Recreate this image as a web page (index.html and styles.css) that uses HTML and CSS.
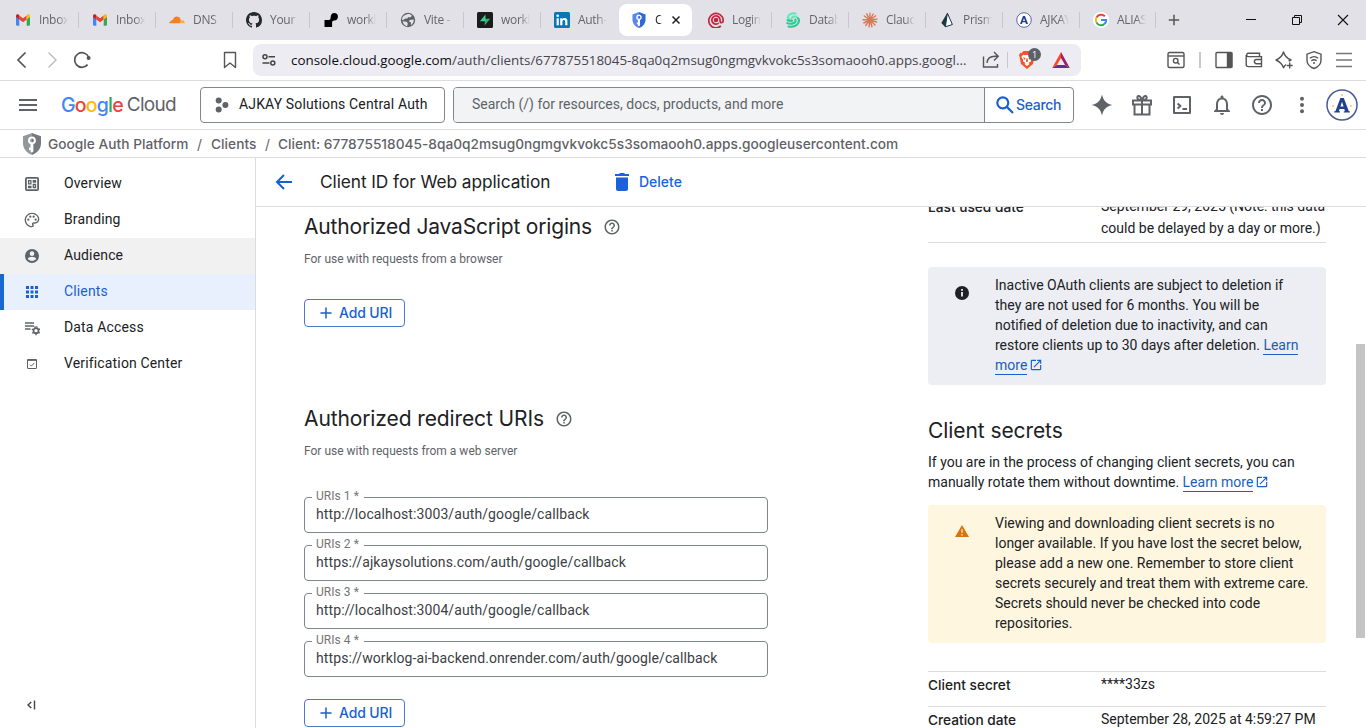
FILE: index.html
```html
<!DOCTYPE html>
<html lang="en">
<head>
<meta charset="utf-8">
<title>Google Auth Platform</title>
<link rel="stylesheet" href="styles.css">
</head>
<body>
<svg class="defs" width="0" height="0">
  <defs>
    <symbol id="gmail" viewBox="0 0 16 16">
      <path fill="#4285f4" d="M1 4.6v8c0 .6.5 1.100 1.100 1.100H4.300V7.300L1 4.600z"/>
      <path fill="#34a853" d="M11.700 13.700h2.200c.6 0 1.100-.5 1.100-1.100v-8l-3.300 2.700z"/>
      <path fill="#ea4335" d="M4.300 7.500V3.500L8 6.300l3.700-2.800v4L8 10.300z"/>
      <path fill="#fbbc04" d="M11.700 3.500v4L15 5V3.900c0-1.400-1.500-2.100-2.600-1.300z"/>
      <path fill="#c5221f" d="M1 5l3.300 2.500v-4l-.7-.9C2.500 1.800 1 2.500 1 3.900z"/>
    </symbol>
    <symbol id="help" viewBox="0 0 24 24">
      <path d="M11 18h2v-2h-2v2zm1-16C6.480 2 2 6.480 2 12s4.480 10 10 10 10-4.480 10-10S17.520 2 12 2zm0 18c-4.410 0-8-3.590-8-8s3.590-8 8-8 8 3.590 8 8-3.590 8-8 8zm0-14c-2.210 0-4 1.790-4 4h2c0-1.100.9-2 2-2s2 .9 2 2c0 2-3 1.750-3 5h2c0-2.250 3-2.500 3-5 0-2.210-1.790-4-4-4z"/>
    </symbol>
    <symbol id="plus" viewBox="0 0 24 24"><path d="M21.500 13.300h-8.200v8.200h-2.600v-8.200H2.500v-2.600h8.200V2.500h2.600v8.200h8.200z"/></symbol>
    <symbol id="ext" viewBox="0 0 24 24">
      <path d="M19 19H5V5h7V3H5c-1.110 0-2 .9-2 2v14c0 1.100.89 2 2 2h14c1.100 0 2-.9 2-2v-7h-2v7zM14 3v2h3.590l-9.830 9.830 1.410 1.410L19 6.410V10h2V3h-7z"/>
    </symbol>
    <symbol id="ajk" viewBox="0 0 32 32">
      <circle cx="16" cy="16" r="15" fill="#fff" stroke="#4a5a94" stroke-width="1.500"/>
      <path fill="#21418f" fill-rule="evenodd" d="M14.400 9h3.400l5 13.200h1v1.300h-6v-1.300h1.200l-.8-2.200h-4.600l-.8 2.200H14v1.300H8.200v-1.300h1.200zM16 12.700l-1.600 4.700h3.200z"/>
    </symbol>
    <symbol id="shieldkey" viewBox="0 0 20 22">
      <path class="sh-a" d="M10 0l9 3.300v7.200c0 5-3.500 9.300-9 11.500z"/>
      <path class="sh-b" d="M10 0L1 3.300v7.200c0 5 3.500 9.300 9 11.500z"/>
      <path fill="#fff" fill-rule="evenodd" d="M10 3.400a4 4 0 0 1 1.400 7.700v7.200l-1.400 1.500-1.500-1.500V17H7v-2.500h1.500v-3.400A4 4 0 0 1 10 3.400zm0 2.100a1.900 1.900 0 1 0 0 3.800 1.900 1.900 0 0 0 0-3.800z"/>
    </symbol>
  </defs>
</svg>

<div class="window">
  <div class="tabs">
    <div class="tab"><svg class="fav"><use href="#gmail"/></svg><span class="tl">Inbox</span></div>
    <div class="tab sep"><svg class="fav"><use href="#gmail"/></svg><span class="tl">Inbox</span></div>
    <div class="tab sep"><svg class="fav" viewBox="0 0 16 16"><path fill="#f48120" d="M.3 11.300c0-1.200.9-2.100 2-2.200-.1-1 .8-1.700 1.700-1.300C4.500 5.700 6 4.600 7.800 4.600c2 0 3.300 1.200 3.800 3l.3 1.500-.6 2.200z"/><path fill="#faad3f" d="M11.700 11.300l.9-3.200c1.900-.1 3.200 1.300 3.200 3.200z"/></svg><span class="tl">DNS</span></div>
    <div class="tab sep"><svg class="fav" viewBox="0 0 16 16"><path fill="#24292f" d="M8 0C3.580 0 0 3.580 0 8c0 3.540 2.290 6.530 5.470 7.590.4.070.55-.17.55-.38 0-.19-.01-.82-.01-1.490-2.010.37-2.530-.49-2.690-.94-.09-.23-.48-.94-.82-1.130-.28-.15-.68-.52-.01-.53.630-.010 1.080.580 1.230.820.720 1.210 1.870.870 2.330.660.070-.52.280-.870.510-1.070-1.780-.2-3.640-.89-3.640-3.950 0-.87.310-1.590.820-2.150-.08-.2-.36-1.020.080-2.120 0 0 .67-.21 2.200.82.640-.18 1.320-.27 2-.27s1.360.09 2 .27c1.530-1.040 2.200-.82 2.200-.82.440 1.100.160 1.920.080 2.120.510.560.820 1.270.820 2.150 0 3.070-1.870 3.750-3.650 3.950.290.250.540.730.540 1.480 0 1.070-.01 1.930-.01 2.200 0 .210.150.460.550.380A8.010 8.010 0 0 0 16 8c0-4.420-3.580-8-8-8z"/></svg><span class="tl">Your</span></div>
    <div class="tab sep"><svg class="fav" viewBox="0 0 16 16"><path d="M11.200 1a3.700 3.700 0 1 1 0 7.400c-1.200 0-2.100.8-2.100 2.100V15H1.500V8h4.200c1.200 0 1.900-.8 1.900-2.200C7.600 3 9 1 11.200 1z"/></svg><span class="tl">workl</span></div>
    <div class="tab sep"><svg class="fav" viewBox="0 0 16 16"><circle cx="8" cy="8" r="7.200" fill="#5f6368"/><path fill="#e3e2e8" d="M7 2.300c2-.6 3.900.1 4.900 1.600L10 5.500 8.200 5l-.9 1.500H5.200L3 8.200 1.900 7.500C2.100 4.800 4.500 2.800 7 2.300zM2.600 9.200l3.900.5 1.300 1.600-.6 2.900C4.700 13.700 3 11.700 2.600 9.200zM9.500 8l4.300-.6c.2 2.400-1.100 4.500-3 5.700l.2-2.500-1.800-.9z"/></svg><span class="tl">Vite -</span></div>
    <div class="tab sep"><svg class="fav" viewBox="0 0 16 16"><rect width="16" height="16" rx="1.500" fill="#1c1c1c"/><path fill="#2fae78" d="M8 6.800h5.200L7.600 13.400z"/><path fill="#3ecf8e" d="M8.500 2.500v6.700H2.900z"/></svg><span class="tl">workl</span></div>
    <div class="tab sep"><svg class="fav" viewBox="0 0 16 16"><rect width="16" height="16" rx="1.500" fill="#0a77b5"/><g fill="#fff"><circle cx="3.700" cy="3.800" r="1.300"/><path d="M2.600 6.200h2.200v7H2.600zM6.200 6.200h2.100v1c.5-.8 1.200-1.200 2.300-1.200 2.200 0 2.800 1.400 2.800 3.500v3.700h-2.200V9.900c0-1.100-.2-1.900-1.300-1.900s-1.500.8-1.500 1.900v3.300H6.200z"/></g></svg><span class="tl">Auth-</span></div>
    <div class="tab active"><svg class="fav blue"><use href="#shieldkey"/></svg><span class="tl short">Cl</span><svg class="close" viewBox="0 0 10 10"><path d="M1.500 1.500l7 7m0-7l-7 7" stroke="#222" stroke-width="1.500"/></svg></div>
    <div class="tab"><svg class="fav" viewBox="0 0 16 16" fill="none" stroke="#c2263f" stroke-width="1.700"><path d="M12.800 14A7.200 7.200 0 1 1 15.200 8.500c0 1.300-.6 2.200-1.600 2.200s-1.500-.8-1.500-1.800V8A4.100 4.100 0 1 0 10.800 11"/><circle cx="8" cy="8" r="1.400" fill="#c2263f"/></svg><span class="tl">Login</span></div>
    <div class="tab sep"><svg class="fav" viewBox="0 0 16 16" fill="none" stroke-linecap="round" stroke-width="2.100"><path stroke="#63e8b5" d="M10.500 1.500C5.500 1 3 3 3 5.200c0 1.600 1.200 2.500 3 2.600M11.500 4.600C8.200 4.100 6.800 5 7 6.300"/><path stroke="#2ec990" d="M12.800 6.200c1.300 1 1.600 3 .3 5-1.700 2.700-5.600 3.900-9.600 3.300M10.300 7.500c.9 1.400 0 3.600-3.200 4.100-1.500.3-3.300.2-4.800-.5M2.600 8.300c1.300.6 2.800.8 4.500.5"/></svg><span class="tl">Datab</span></div>
    <div class="tab sep"><svg class="fav" viewBox="0 0 16 16" stroke="#d97757" stroke-width="1.400" stroke-linecap="round"><path d="M8 8V1.200M8 8l3.200-6M8 8l5.700-4.200M8 8l7-.9M8 8l6.500 2M8 8l5 5M8 8l2 6.700M8 8l-1 6.900M8 8l-4.300 5.500M8 8l-6.200 3M8 8l-7-.3M8 8L2.300 4M8 8L4.700 1.900"/></svg><span class="tl">Claud</span></div>
    <div class="tab sep"><svg class="fav" viewBox="0 0 16 16"><path fill="#fff" stroke="#173647" stroke-width="1" d="M8.400 1.200l5 11.300-7 2.300z"/><path fill="#173647" d="M8.400.7L2.300 11l3.900 4z"/></svg><span class="tl">Prisma</span></div>
    <div class="tab sep"><svg class="fav" viewBox="0 0 16 16"><circle cx="8" cy="8" r="7.300" fill="#fff" stroke="#4a5a94" stroke-width=".9"/><path fill="#21418f" fill-rule="evenodd" d="M7 4h2l3 8h-2l-.6-1.700H6.500L5.900 12H4zM8 6.300L7 9h2z"/></svg><span class="tl">AJKAY</span></div>
    <div class="tab sep"><svg class="fav" viewBox="0 0 16 16"><circle cx="8" cy="8" r="8" fill="#fff"/><g fill="none" stroke-width="2"><path stroke="#ea4335" d="M11.900 4.300A5.200 5.200 0 0 0 3.400 5.600"/><path stroke="#fbbc04" d="M3.400 5.600a5.200 5.200 0 0 0 0 4.800"/><path stroke="#34a853" d="M3.400 10.400a5.200 5.200 0 0 0 7.900 1.700"/><path stroke="#4285f4" d="M11.300 12.100A5 5 0 0 0 13.200 8H8"/></g></svg><span class="tl">ALIAS</span></div>
    <div class="newtab"><svg width="12" height="12" viewBox="0 0 12 12"><path d="M6 .8v10.400M.8 6h10.400" stroke="#555" stroke-width="1.500"/></svg></div>
    <div class="winbtns">
      <svg width="12" height="12" viewBox="0 0 12 12"><path d="M1 5.500h10" stroke="#111"/></svg>
      <svg width="12" height="12" viewBox="0 0 12 12" fill="none" stroke="#111"><path d="M1.500 3.500h7v7h-7zM3.500 3.500v-2h7v7h-2"/></svg>
      <svg width="12" height="12" viewBox="0 0 12 12"><path d="M1 1l10 10M11 1L1 11" stroke="#111" stroke-width="1.100"/></svg>
    </div>
  </div>

  <div class="toolbar">
    <svg class="ti back" viewBox="0 0 20 20"><path d="M13.500 2.500L6 10l7.500 7.500"/></svg>
    <svg class="ti fwd" viewBox="0 0 20 20"><path d="M6.500 2.500L14 10l-7.500 7.500"/></svg>
    <svg class="ti reload" viewBox="0 0 20 20"><path d="M15.600 14.600A7.300 7.300 0 1 1 16.600 7"/><circle cx="16.600" cy="7.900" r="2" fill="#555" stroke="none"/></svg>
    <svg class="ti bookmark" viewBox="0 0 20 20"><path d="M4.500 2.500h11v15L10 13l-5.500 4.500z" stroke-linejoin="round"/></svg>
    <div class="urlbar">
      <svg class="tune" viewBox="0 0 16 16" fill="none" stroke="#444" stroke-width="1.500"><circle cx="4" cy="4.700" r="2"/><path d="M7.500 4.700H14M1.500 11h7"/><circle cx="11.800" cy="11" r="2"/></svg>
      <div class="url"><b>console.cloud.google.com</b>/auth/clients/677875518045-8qa0q2msug0ngmgvkvokc5s3somaooh0.apps.googl...</div>
      <svg class="ti share" viewBox="0 0 20 20"><path d="M2.500 6.500v10.500h14v-3M6 13c.3-4.500 3-6.800 8-6.800h3M13 2l4.200 4.200L13 10.400"/></svg>
      <i class="vsep"></i>
      <span class="brave"><svg width="18" height="20" viewBox="0 0 18 20"><path fill="#f1562b" d="M5.500 1h7L14.300 3l1.400-.2 1.300 2.400-.5 1.600-1.500 7.200L9 19l-6-5L1.500 6.800 1 5.200l1.300-2.400L3.700 3z"/><path fill="#fff" d="M5 4.700l2.300.5L9 4.700l1.700.5 2.300-.5 1.700 2.300-2 2.800.4 1.400L10.500 13l1 1L9 16l-2.500-2 1-1-2.600-1.800.4-1.400-2-2.800z"/><path fill="#f1562b" d="M5 7.300l2.600.6-1 2zM13 7.300l-2.600.6 1 2zM8.300 8.500h1.400l.3 3-1 .7-1-.7z"/></svg><span class="badge">1</span></span>
      <svg class="bat" width="20" height="20" viewBox="0 0 20 20"><path fill="#ff4724" d="M10 2L1.200 18l4.700-2.900L10 8z"/><path fill="#9e1f63" d="M10 2l8.800 16-4.700-2.900L10 8z"/><path fill="#662d91" d="M1.200 18h17.600l-4.700-2.900H5.900z"/></svg>
    </div>
    <div class="tright">
      <svg class="ti" viewBox="0 0 20 20"><rect x="2" y="2.500" width="16" height="15" rx="1.500"/><path d="M2 6h16"/><circle cx="9.700" cy="10.700" r="2.300"/><path d="M11.500 12.500l2 2"/></svg>
      <i class="vsep"></i>
      <svg class="ti" viewBox="0 0 20 20"><rect x="2" y="2.500" width="16" height="15" rx="1"/><path d="M13.500 3h4v14h-4z" fill="#555"/></svg>
      <svg class="ti" viewBox="0 0 20 20"><path d="M15.500 6V3.300H4A1.700 1.700 0 0 0 4 6.600h13.500v10H4.200a2 2 0 0 1-2-2V5M17.500 9.500h-5a2 2 0 0 0 0 4.200h5"/></svg>
      <svg class="ti" viewBox="0 0 20 20"><path d="M12 14.500c-1 .7-1.700 1.500-2.500 3.300-1.300-4-3.500-6-7.500-7.800 4-1.500 6.200-3.700 7.500-8 1.300 4.300 3.500 6.500 7.500 8-1 .4-1.700.8-2.400 1.300M15.700 12.500v6M12.700 15.500h6" stroke-linejoin="round"/></svg>
      <svg class="ti" viewBox="0 0 20 20"><path d="M10 1.700l7 2.500v6c0 3.800-2.500 6.500-7 8.300-4.500-1.800-7-4.500-7-8.300v-6zM5.800 8.300c2.500-2 5.900-2 8.400 0M7.300 10.800c1.600-1.300 3.800-1.300 5.400 0"/><circle cx="10" cy="13" r="1" fill="#555" stroke="none"/></svg>
      <svg class="ti" viewBox="0 0 20 20"><path d="M2 3.500h16M2 10h16M2 16.500h16" stroke="#777"/></svg>
    </div>
  </div>

  <header class="gc">
    <svg class="burger" viewBox="0 0 18 12"><path d="M0 1h18M0 6h18M0 11h18" stroke="#5f6368" stroke-width="2"/></svg>
    <div class="logo"><span class="lg"><i class="b">G</i><i class="r">o</i><i class="y">o</i><i class="b">g</i><i class="g">l</i><i class="r">e</i></span><span class="lc">Cloud</span></div>
    <div class="project"><svg width="14" height="16" viewBox="0 0 14 16" fill="#5f6368"><circle cx="3.700" cy="3.500" r="3"/><circle cx="10.400" cy="8" r="3"/><circle cx="3.700" cy="12.500" r="3"/></svg><span>AJKAY Solutions Central Auth</span></div>
    <div class="search"><div class="sinput">Search (/) for resources, docs, products, and more</div><div class="sbtn"><svg width="18" height="18" viewBox="0 0 18 18" fill="none" stroke="#1a5fd0" stroke-width="2.200"><circle cx="6.800" cy="6.800" r="5.500"/><path d="M10.900 10.900L17 17"/></svg><span>Search</span></div></div>
    <div class="hicons">
      <svg viewBox="0 0 24 24"><path d="M12 1.500c1.200 6 4.500 9.300 10.500 10.500-6 1.200-9.300 4.500-10.500 10.500-1.200-6-4.500-9.300-10.500-10.500 6-1.200 9.300-4.500 10.500-10.500z"/></svg>
      <svg viewBox="0 0 24 24"><path fill="none" stroke="#5f6368" stroke-width="2" d="M3 7.500h18v4H3zM4.500 11.500v10h15v-10M12 7.500v14M12 7C10 1.500 6.500 2.500 7.500 5.500 8 7 10 7 12 7zm0 0c2-5.500 5.500-4.500 4.500-1.500C16 7 14 7 12 7z"/></svg>
      <svg viewBox="0 0 24 24"><path fill="none" stroke="#5f6368" stroke-width="2" stroke-linejoin="round" d="M4 4h16v16H4zM7.500 10.500l3 2.500-3 2.500M12.500 16h4.500"/></svg>
      <svg viewBox="0 0 24 24"><path d="M12 22c1.100 0 2-.9 2-2h-4c0 1.100.9 2 2 2zm6-6v-5c0-3.070-1.630-5.640-4.500-6.320V4c0-.83-.67-1.500-1.500-1.500s-1.500.67-1.500 1.500v.68C7.640 5.360 6 7.920 6 11v5l-2 2v1h16v-1l-2-2zm-2 1H8v-6c0-2.480 1.510-4.500 4-4.500s4 2.020 4 4.500v6z"/></svg>
      <svg><use href="#help"/></svg>
      <svg viewBox="0 0 24 24"><circle cx="12" cy="5.800" r="2"/><circle cx="12" cy="12" r="2"/><circle cx="12" cy="18.200" r="2"/></svg>
    </div>
    <svg class="avatar"><use href="#ajk"/><g fill="#e8c95a"><circle cx="16" cy="6" r=".9"/><circle cx="7" cy="17" r=".9"/><circle cx="25" cy="17" r=".9"/></g></svg>
  </header>

  <nav class="crumbs"><svg class="gshield"><use href="#shieldkey"/></svg><span class="c1">Google Auth Platform</span><span class="sl">/</span><span class="c2">Clients</span><span class="sl">/</span><span class="c3">Client: 677875518045-8qa0q2msug0ngmgvkvokc5s3somaooh0.apps.googleusercontent.com</span></nav>

  <div class="body">
    <aside class="side">
      <div class="item"><svg viewBox="0 0 16 16"><rect x="1.900" y="1.900" width="12.200" height="12.200" rx="1" fill="none" stroke="#5f6368" stroke-width="1.800"/><path fill="none" stroke="#5f6368" stroke-width="1.300" d="M4.600 4.600h2.300v3.300H4.600zM9.300 4.600h2.200v1.400H9.300zM4.600 10.300h2.300v1.200H4.600zM9.300 8.500h2.200v3H9.300z"/></svg>Overview</div>
      <div class="item"><svg viewBox="0 0 24 24"><path d="M12 23C5.900 23 1 18.100 1 12S5.900 1 12 1s11 4.500 11 10c0 3.700-3 6.600-6.600 6.600h-2c-.3 0-.5.200-.5.500 0 .2.100.3.200.4.400.500.700 1.200.7 1.800A2.700 2.700 0 0 1 12 23zm0-20c-5 0-9 4-9 9s4 9 9 9c.4 0 .7-.3.700-.7 0-.2-.1-.3-.2-.4-.5-.500-.7-1.100-.7-1.800a2.700 2.700 0 0 1 2.700-2.700h2c2.500 0 4.500-2 4.500-4.400C21 6.600 17 3 12 3z"/><circle cx="6.500" cy="11.500" r="1.700"/><circle cx="9.500" cy="7" r="1.700"/><circle cx="14.500" cy="7" r="1.700"/><circle cx="17.500" cy="11.500" r="1.700"/></svg>Branding</div>
      <div class="item hover"><svg viewBox="0 0 24 24"><path d="M12 1.500a10.500 10.500 0 1 0 0 21 10.500 10.500 0 0 0 0-21zM12 5a3.500 3.500 0 1 1 0 7 3.500 3.500 0 0 1 0-7zm0 14.500c-2.700 0-5-1.300-6.300-3.300.1-2 4.200-3 6.300-3s6.200 1 6.300 3c-1.300 2-3.600 3.300-6.300 3.300z" fill-rule="evenodd"/></svg>Audience</div>
      <div class="item sel"><svg viewBox="0 0 16 16"><path d="M2 2h3v3H2zM6.500 2h3v3h-3zM11 2h3v3h-3zM2 6.500h3v3H2zM6.500 6.500h3v3h-3zM11 6.500h3v3h-3zM2 11h3v3H2zM6.500 11h3v3h-3zM11 11h3v3h-3z"/></svg>Clients</div>
      <div class="item"><svg viewBox="0 0 16 16" fill="none" stroke="#5f6368"><path stroke-width="1.300" d="M1 3h9M1 6h9M1 9h5.500"/><circle cx="12" cy="10.700" r="2.500" stroke-width="1.700"/><path stroke-width="1.400" stroke-dasharray="1.500 2.100" d="M12 6.900a3.800 3.800 0 1 1 0 7.600 3.800 3.800 0 0 1 0-7.600z"/></svg>Data Access</div>
      <div class="item"><svg viewBox="0 0 16 16" fill="none" stroke="#5f6368"><rect x="3.500" y="3.500" width="9" height="9" rx=".5"/><path d="M3.500 4h9" stroke-width="1.800"/><path d="M5.800 8.600l1.500 1.500 3-3.200"/></svg>Verification Center</div>
      <div class="collapse"><svg width="12" height="12" viewBox="0 0 12 12" fill="none" stroke="#444" stroke-width="1.400"><path d="M6.300 3L3 6l3.300 3M9.500 1.500v9"/></svg></div>
    </aside>

    <section class="main">
      <div class="titlebar">
        <svg class="arrow" viewBox="0 0 18 16" fill="none" stroke="#1a5fd0" stroke-width="2"><path d="M9 1L2 8l7 7M2 8h15"/></svg>
        <h1>Client ID for Web application</h1>
        <svg class="trash" viewBox="0 0 14 18"><path fill="#1a62dd" d="M1 4.500h12V16c0 1.100-.9 2-2 2H3c-1.100 0-2-.9-2-2zM0 1h4l1-1h4l1 1h4v2H0z"/></svg>
        <span class="del">Delete</span>
      </div>
      <div class="cols">
        <div class="left">
          <div class="h"><h2 class="w1">Authorized JavaScript origins</h2><svg class="q"><use href="#help"/></svg></div>
          <p class="sub">For use with requests from a browser</p>
          <button class="add"><svg><use href="#plus"/></svg>Add URI</button>
          <div class="h second"><h2 class="w2">Authorized redirect URIs</h2><svg class="q"><use href="#help"/></svg></div>
          <p class="sub">For use with requests from a web server</p>
          <div class="fields">
            <fieldset><legend>URIs 1 *</legend><span>http://localhost:3003/auth/google/callback</span></fieldset>
            <fieldset><legend>URIs 2 *</legend><span>https://ajkaysolutions.com/auth/google/callback</span></fieldset>
            <fieldset><legend>URIs 3 *</legend><span>http://localhost:3004/auth/google/callback</span></fieldset>
            <fieldset><legend>URIs 4 *</legend><span>https://worklog-ai-backend.onrender.com/auth/google/callback</span></fieldset>
          </div>
          <button class="add"><svg><use href="#plus"/></svg>Add URI</button>
        </div>
        <div class="right">
          <div class="row used"><b>Last used date</b><span>September 29, 2025 (Note: this data<br>could be delayed by a day or more.)</span></div>
          <div class="note info"><svg viewBox="0 0 16 16"><circle cx="8" cy="8" r="7" fill="#202124"/><path d="M8 7v4.500M8 4v1.800" stroke="#fff" stroke-width="1.700"/></svg><p>Inactive OAuth clients are subject to deletion if<br>they are not used for 6 months. You will be<br>notified of deletion due to inactivity, and can<br>restore clients up to 30 days after deletion. <a>Learn</a><br><a>more</a><svg class="ext"><use href="#ext"/></svg></p></div>
          <h2 class="w3">Client secrets</h2>
          <p class="para">If you are in the process of changing client secrets, you can<br>manually rotate them without downtime. <a>Learn more</a><svg class="ext"><use href="#ext"/></svg></p>
          <div class="note warn"><svg viewBox="0 0 16 16"><path d="M8 2l7 12H1z" fill="#d9730d"/><path d="M8 6.200v3.600M8 11v1.500" stroke="#fcebc8" stroke-width="1.300"/></svg><p>Viewing and downloading client secrets is no<br>longer available. If you have lost the secret below,<br>please add a new one. Remember to store client<br>secrets securely and treat them with extreme care.<br>Secrets should never be checked into code<br>repositories.</p></div>
          <div class="rows">
            <div class="row"><b>Client secret</b><span>****33zs</span></div>
            <div class="row"><b>Creation date</b><span>September 28, 2025 at 4:59:27 PM</span></div>
          </div>
        </div>
      </div>
      <div class="thumb"></div>
    </section>
  </div>
</div>
</body>
</html>
```

FILE: styles.css
```css
* { box-sizing: border-box; }
body { margin: 0; overflow: hidden; background: #fff; font: 14px/20px Roboto, sans-serif; color: #202124; }
h1, h2, p { margin: 0; font-weight: 400; }
i { font-style: normal; }
svg { flex: none; display: block; }
.defs { position: absolute; }
.window { width: 1366px; height: 728px; display: flex; flex-direction: column; overflow: hidden; }

/* Tab strip */
.tabs { height: 40px; flex: none; background: #e2e1e8; display: flex; align-items: center; padding-left: 1px; }
.tab { width: 77px; height: 32px; flex: none; display: flex; align-items: center; padding-left: 14px; position: relative; }
.tab.sep::before { content: ""; position: absolute; left: 0; top: 8px; width: 1px; height: 16px; background: #c8c7ce; }
.fav { width: 16px; height: 16px; }
.tl { margin-left: 8px; width: 29px; overflow: hidden; white-space: nowrap; font: 12px/20px "Open Sans", sans-serif; letter-spacing: -.3px; color: #66656c; -webkit-mask-image: linear-gradient(90deg, #000 65%, transparent); mask-image: linear-gradient(90deg, #000 65%, transparent); }
.tab.active { width: 73px; margin-left: 2px; margin-right: 2px; background: #fff; border-radius: 8px; padding-left: 12px; }
.tl.short { width: 7px; color: #222; }
.close { width: 10px; height: 10px; margin-left: 9px; }
.sh-a { fill: var(--shield-dark, #3367d6); }
.sh-b { fill: var(--shield-light, #5a87e8); }
.newtab { border-left: 1px solid #c8c7ce; height: 16px; margin-left: -1px; padding: 2px 0 0 12px; }
.winbtns { margin-left: auto; display: flex; gap: 34px; padding-right: 17px; }

/* Browser toolbar */
.toolbar { height: 41px; flex: none; display: flex; align-items: center; border-bottom: 1px solid #dcdce0; }
.ti { width: 20px; height: 20px; fill: none; stroke: #555; stroke-width: 1.4; }
.back { margin-left: 12px; stroke-width: 1.7; }
.fwd { margin-left: 10px; stroke: #bbb; }
.reload { margin-left: 10px; stroke-width: 1.7; }
.bookmark { margin-left: 128px; }
.urlbar { width: 828px; height: 32px; margin-left: 13px; background: #edecf3; border-radius: 8px; display: flex; align-items: center; padding-left: 8px; }
.tune { width: 16px; height: 16px; }
.url { width: 677px; margin-left: 14px; white-space: nowrap; font: 13.4px/20px "Open Sans", sans-serif; letter-spacing: -.01px; color: #46454b; }
.url b { font-weight: 400; color: #0d0d10; }
.share { margin-left: 13px; }
.vsep { width: 1px; height: 16px; background: #c8c7ce; }
.urlbar .vsep { margin-left: 6px; }
.brave { position: relative; margin-left: 10px; }
.badge { position: absolute; left: 10px; top: -2px; width: 13px; height: 13px; border-radius: 7px; background: #5b6169; color: #fff; font: 9px/13px "Open Sans", sans-serif; text-align: center; }
.bat { margin-left: 15px; }
.tright { display: flex; align-items: center; margin-left: 85px; }
.tright .ti { margin-right: 10px; }
.tright .vsep { margin: 0 13px 0 3px; width: 2px; }

/* Console header */
.gc { height: 49px; flex: none; display: flex; align-items: center; border-bottom: 1px solid #dadce0; }
.burger { width: 18px; height: 12px; margin-left: 19px; }
.logo { width: 139px; padding-left: 24px; display: flex; align-items: center; }
.logo span { font: 20px/24px Inter, sans-serif; }
.logo .lg { width: 65px; font-weight: 500; font-size: 19.5px; letter-spacing: -.8px; }
.logo .lc { color: #5f6368; font-size: 19px; letter-spacing: -.7px; margin-left: 2px; }
.b { color: #4285f4; } .r { color: #ea4335; } .y { color: #fbbc04; } .g { color: #34a853; }
.project { width: 245px; height: 36px; margin-left: 24px; border: 1px solid #80868b; border-radius: 4px; display: flex; align-items: center; padding-left: 14px; letter-spacing: .14px; white-space: nowrap; }
.project span { margin: -2px 0 0 10px; }
.search { width: 621px; height: 36px; margin-left: 8px; border: 1px solid #80868b; border-radius: 4px; display: flex; overflow: hidden; }
.sinput { width: 531px; padding: 6px 0 0 18px; background: #f1f3f4; color: #5f6368; border-right: 1px solid #80868b; }
.sbtn { display: flex; align-items: center; padding-left: 11px; color: #1a5fd0; font: 500 14px/20px Inter, sans-serif; letter-spacing: -.3px; }
.sbtn span { margin-left: 2px; }
.hicons { display: flex; gap: 16px; margin-left: 16px; }
.hicons svg { width: 24px; height: 24px; fill: #5f6368; }
.avatar { width: 32px; height: 32px; margin-left: 12px; }

/* Breadcrumbs */
.crumbs { height: 28px; flex: none; display: flex; align-items: center; border-bottom: 1px solid #dadce0; font: 500 13.7px/20px Inter, sans-serif; color: #5f6368; white-space: nowrap; }
.gshield { width: 20px; height: 22px; margin: 0 6px 0 22px; --shield-dark: #757a7f; --shield-light: #94989c; }
.c1 { width: 141px; letter-spacing: .03px; }
.sl { width: 5px; margin: 0 9px 0 8px; font-weight: 400; }
.c2 { width: 46px; letter-spacing: .05px; }
.c2 + .sl { margin-right: 8px; }
.c3 { letter-spacing: .01px; }

/* Side navigation */
.body { flex: 1; display: flex; min-height: 0; }
.side { width: 256px; flex: none; border-right: 1px solid #dadce0; padding-top: 8px; display: flex; flex-direction: column; }
.item { height: 36px; display: flex; align-items: center; padding: 0 0 2px 24px; letter-spacing: .15px; }
.item svg { width: 16px; height: 16px; margin: 2px 24px 0 0; fill: #5f6368; }
.item svg[fill="none"] { fill: none; }
.hover { background: #f1f1f1; }
.sel { background: #e8f0fe; color: #1a5fd0; border-left: 4px solid #1967d2; padding-left: 20px; }
.item.sel svg { fill: #1a5fd0; }
.collapse { margin-top: auto; padding: 0 0 17px 25px; }

/* Content */
.main { flex: 1; display: flex; flex-direction: column; position: relative; min-width: 0; }
.titlebar { height: 49px; flex: none; border-bottom: 1px solid #dadce0; display: flex; align-items: center; }
.arrow { width: 18px; height: 16px; margin-left: 19px; }
h1 { width: 295px; margin-left: 27px; font: 17.3px/24px Inter, sans-serif; letter-spacing: -.07px; white-space: nowrap; }
.trash { width: 14px; height: 18px; }
.del { margin-left: 10px; font: 500 14px/20px Inter, sans-serif; color: #1a62dd; }
.cols { flex: 1; min-height: 0; overflow: hidden; display: flex; }
.left { width: 672px; padding: 4px 0 0 48px; }
.h { display: flex; align-items: center; height: 32px; }
h2 { font: 21px/32px Inter, sans-serif; white-space: nowrap; }
.w1 { letter-spacing: -.18px; width: 300px; }
.w2 { letter-spacing: -.11px; width: 252px; }
.w3 { letter-spacing: -.08px; margin-top: 30px; }
.q { width: 18px; height: 18px; margin-left: -1px; fill: #5f6368; }
.sub { margin-top: 6px; font-size: 12px; color: #5f6368; }
.add { width: 101px; height: 28px; margin-top: 30px; border: 1px solid #4a7ac8; border-radius: 4px; background: #fff; display: flex; align-items: center; padding: 0 0 0 14px; color: #1a5fd0; font: 500 14px/20px Inter, sans-serif; letter-spacing: -.15px; }
.add svg { width: 14px; height: 14px; margin-right: 6px; fill: #1a5fd0; }
.second { margin-top: 76px; }
.fields { display: flex; flex-direction: column; gap: 6px; margin-top: 30px; }
fieldset { width: 464px; height: 42px; margin: 0; padding: 1px 11px 0; border: 1px solid #80868b; border-radius: 4px; min-width: 0; color: #3c4043; }
legend { margin-left: -4px; padding: 0 5px 0 4px; height: 12px; font-size: 12px; line-height: 10px; color: #757575; letter-spacing: .05px; }
fieldset span { display: block; letter-spacing: .1px; white-space: nowrap; }
.fields + .add { margin-top: 22px; }

.right { width: 398px; }
.row { display: flex; border-top: 1px solid #dadce0; padding: 2px 0; height: 35px; white-space: nowrap; }
.row b { width: 173px; font: 500 13.7px/22px Inter, sans-serif; }
.row.used { margin-top: -13px; height: 49px; padding: 0; border-bottom: 1px solid #dadce0; line-height: 22px; }
.used b { padding-top: 1px; }
.note { border-radius: 4px; display: flex; padding-left: 26px; white-space: nowrap; }
.note > svg { width: 16px; height: 16px; margin-right: 25px; }
.info { height: 118px; margin-top: 24px; background: #eceef3; padding-top: 8px; }
.info > svg { margin-top: 10px; }
.note p svg, .para svg { display: inline-block; }
a { color: #1a5fb4; border-bottom: 1px solid #1a5fd0; padding-bottom: 1px; }
.ext { width: 14px; height: 14px; margin-left: 2px; vertical-align: -2px; fill: #1a5fd0; }
.para { margin-top: 5px; white-space: nowrap; }
.warn { height: 138px; margin-top: 13px; background: #fef6df; padding-top: 8px; }
.warn > svg { margin-top: 10px; }
.rows { margin-top: 28px; }
.thumb { position: absolute; right: 1px; top: 186px; width: 9px; height: 294px; background: #c4c4c4; }
```
